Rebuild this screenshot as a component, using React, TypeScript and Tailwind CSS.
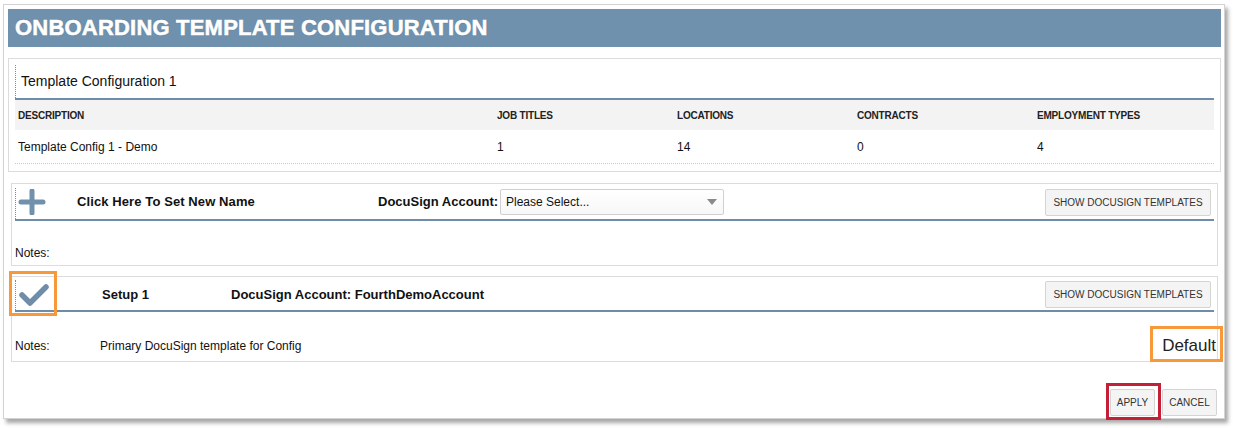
import React from "react";

const Plus = () => (
  <svg width="28" height="26" viewBox="0 0 28 26">
    <path d="M3 13 H25 M14 2 V24" stroke="#7090ab" strokeWidth="5" strokeLinecap="round" fill="none" />
  </svg>
);

const Check = () => (
  <svg width="32" height="26" viewBox="0 0 32 26">
    <path d="M4 13 L12 21 L28 5" stroke="#6f8ca8" strokeWidth="5.5" strokeLinecap="round" strokeLinejoin="round" fill="none" />
  </svg>
);

const Btn = ({ children, className = "" }: { children: React.ReactNode; className?: string }) => (
  <div
    className={
      "flex shrink-0 items-center justify-center bg-[#f4f4f4] border border-[#d4d4d4] rounded-[2px] text-[10px] text-[#333] uppercase whitespace-nowrap " +
      className
    }
  >
    {children}
  </div>
);

export default function App() {
  return (
    <div className="relative w-[1233px] h-[428px] bg-white pt-[4px] pl-[3px] font-['Liberation_Sans',Arial,sans-serif] text-[#111]">
      <div className="w-[1222px] h-[415px] border border-[#d3d3d3] bg-white shadow-[3px_4px_4px_rgba(0,0,0,0.35)] px-[4px] pt-[4px] flex flex-col">
        {/* Header */}
        <div className="h-[38px] bg-[#6f91ad] flex items-center pl-[7px] w-[1213px]">
          <span className="text-white font-bold text-[22px] leading-none tracking-[0.2px] [-webkit-text-stroke:0.6px_white] [text-shadow:0_0_1px_rgba(40,60,80,0.7)]">
            ONBOARDING TEMPLATE CONFIGURATION
          </span>
        </div>

        {/* Panel 1 */}
        <div className="mt-[11px] w-[1213px] h-[114px] border border-[#dcdcdc] px-[6px] pt-[6px]">
          <div className="h-[33px] border-l border-dotted border-[#6f8ca8] pl-[5px] flex items-center text-[14px] text-[#111]">
            Template Configuration 1
          </div>
          <div className="h-[2px] bg-[#6f8ca8]" />
          <div className="h-[30px] bg-[#f3f3f3] grid grid-cols-[482px_180px_180px_180px_1fr] items-center text-[10px] font-bold text-[#222] tracking-[-0.2px]">
            <div className="pl-[3px]">DESCRIPTION</div>
            <div>JOB TITLES</div>
            <div>LOCATIONS</div>
            <div>CONTRACTS</div>
            <div>EMPLOYMENT TYPES</div>
          </div>
          <div className="h-[34px] border-b border-dotted border-[#c8c8c8] grid grid-cols-[482px_180px_180px_180px_1fr] items-center text-[12px] text-[#111]">
            <div className="pl-[3px]">Template Config 1 - Demo</div>
            <div>1</div>
            <div>14</div>
            <div>0</div>
            <div>4</div>
          </div>
        </div>

        {/* Panel 2 */}
        <div className="mt-[11px] mx-[3px] w-[1207px] h-[83px] border border-[#dcdcdc] px-[3px] pt-[4px] flex flex-col">
          <div className="h-[31px] border-l border-dotted border-[#6f8ca8] flex items-start pl-[2px]">
            <div className="w-[30px] h-[28px] shrink-0 flex items-center">
              <Plus />
            </div>
            <div className="ml-[29px] w-[301px] h-[28px] shrink-0 flex items-center text-[13px] font-bold text-[#111] whitespace-nowrap tracking-[0.1px]">
              Click Here To Set New Name
            </div>
            <div className="w-[122px] h-[28px] shrink-0 flex items-center text-[13px] font-bold text-[#111] whitespace-nowrap">
              DocuSign Account:
            </div>
            <div className="mt-[1px] w-[224px] h-[26px] shrink-0 border border-[#d0d0d0] rounded-[2px] bg-gradient-to-b from-white to-[#f7f7f7] flex items-center pl-[5px] pr-[6px] text-[12px] text-[#111]">
              <span className="flex-1">Please Select...</span>
              <svg width="10" height="6" viewBox="0 0 10 6">
                <path d="M0 0 H10 L5 6 Z" fill="#8a8a8a" />
              </svg>
            </div>
            <div className="flex-1" />
            <Btn className="mt-[1px] w-[166px] h-[27px] mr-[3px]">Show DocuSign Templates</Btn>
          </div>
          <div className="h-[2px] bg-[#6f8ca8]" />
          <div className="flex-1 flex items-end pb-[3px] text-[12px] text-[#111]">Notes:</div>
        </div>

        {/* Panel 3 */}
        <div className="mt-[10px] mx-[3px] w-[1207px] h-[86px] border border-[#dcdcdc] px-[3px] pt-[3px] flex flex-col">
          <div className="h-[30px] border-l border-dotted border-[#6f8ca8] flex items-start pl-[2px]">
            <div className="w-[34px] h-[29px] shrink-0 flex items-center">
              <Check />
            </div>
            <div className="ml-[50px] w-[129px] h-[29px] shrink-0 flex items-center text-[13px] font-bold text-[#111] whitespace-nowrap">
              Setup 1
            </div>
            <div className="h-[29px] flex items-center text-[13px] font-bold text-[#111] whitespace-nowrap">
              DocuSign Account: FourthDemoAccount
            </div>
            <div className="flex-1" />
            <Btn className="mt-[1px] w-[166px] h-[27px] mr-[3px]">Show DocuSign Templates</Btn>
          </div>
          <div className="h-[2px] bg-[#6f8ca8]" />
          <div className="flex-1 flex items-end pb-[6px] text-[12px] text-[#111]">
            <span className="w-[85px]">Notes:</span>
            <span className="flex-1">Primary DocuSign template for Config</span>
            <span className="text-[17px] leading-none mr-[-2px] mb-[1px] text-[#222]">Default</span>
          </div>
        </div>

        {/* Footer */}
        <div className="mt-[27px] flex justify-end gap-[7px] pr-[3px]">
          <Btn className="w-[45px] h-[27px]">Apply</Btn>
          <Btn className="w-[55px] h-[27px]">Cancel</Btn>
        </div>
      </div>

      {/* Annotation overlays */}
      <div className="absolute left-[9px] top-[271px] w-[48px] h-[45px] border-[3px] border-[#f7993a] pointer-events-none" />
      <div className="absolute left-[1150px] top-[326px] w-[73px] h-[36px] border-[3px] border-[#f7993a] pointer-events-none" />
      <div className="absolute left-[1106px] top-[383px] w-[55px] h-[37px] border-[3px] border-[#c32038] pointer-events-none" />
    </div>
  );
}
